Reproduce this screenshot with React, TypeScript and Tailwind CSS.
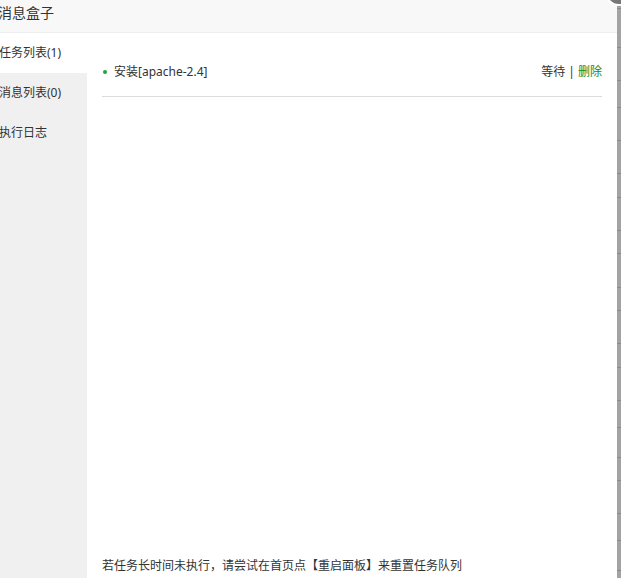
import React from "react";

const lines = [8, 47, 80, 107, 140, 173, 197, 230, 253, 287, 310, 343, 367, 400, 427, 457, 480, 513, 540, 570];

export default function App() {
  return (
    <div
      className="relative w-[621px] h-[578px] overflow-hidden bg-white flex text-[12px] text-[#333]"
      style={{ fontFamily: '"Noto Sans","Noto Sans CJK SC",sans-serif' }}
    >
      <div className="w-[617px] h-full flex flex-col">
        <div className="h-[33px] shrink-0 bg-[#f8f8f8] border-b border-[#eeeeee] flex items-center">
          <span className="ml-[-2px] text-[14px] text-[#333] leading-none mt-[-6px]">消息盒子</span>
        </div>
        <div className="flex flex-1 min-h-0">
          <div className="w-[87px] shrink-0 bg-[#f0f0f0] flex flex-col">
            <div className="h-[40px] bg-white flex items-center ml-[-1px] text-[#333]">任务列表(1)</div>
            <div className="h-[40px] flex items-center ml-[-1px] text-[#333]">消息列表(0)</div>
            <div className="h-[40px] flex items-center ml-[-1px] text-[#333]">执行日志</div>
          </div>
          <div className="flex-1 flex flex-col px-[15px]">
            <div className="mt-[29px] h-[20px] flex items-center justify-between">
              <div className="flex items-center">
                <span className="w-[4px] h-[4px] rounded-full bg-[#20a53a] ml-[1px] mr-[7px]"></span>
                <span>安装[apache-2.4]</span>
              </div>
              <div className="flex items-center">
                <span>等待</span>
                <span className="mx-[3px]">|</span>
                <span className="text-[#0f8a1f]">删除</span>
              </div>
            </div>
            <div className="mt-[14px] h-px bg-[#dddddd]"></div>
            <div className="mt-auto mb-[3px] leading-[18px]">
              若任务长时间未执行，请尝试在首页点【重启面板】来重置任务队列
            </div>
          </div>
        </div>
      </div>
      <div className="w-[4px] h-full bg-[#a3a3a3]">
        {lines.map((y, i) => (
          <div key={i} className="absolute right-0 w-[4px] h-px bg-[#8a8a8a]" style={{ top: y }}></div>
        ))}
      </div>
      <div className="absolute right-[-12px] top-[-22px] w-[28px] h-[28px] rounded-full bg-[#777] border-2 border-white"></div>
    </div>
  );
}
